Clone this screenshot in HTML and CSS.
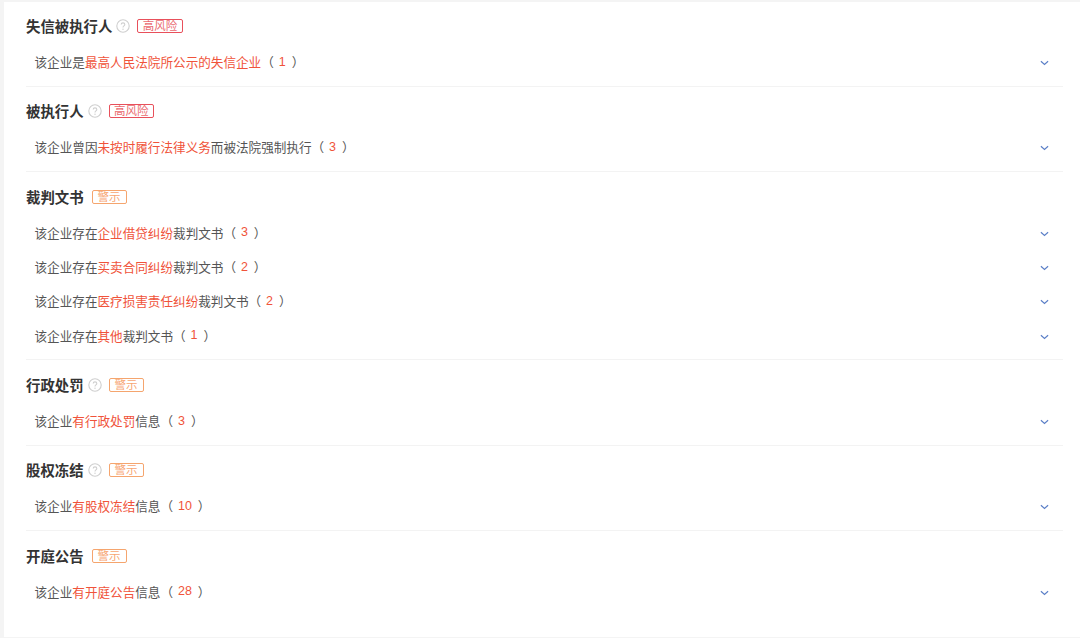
FILE: index.html
```html
<!DOCTYPE html>
<html lang="zh-CN">
<head>
<meta charset="utf-8">
<title>风险信息</title>
<link rel="stylesheet" href="styles.css">
</head>
<body>
<svg class="defs" width="0" height="0" aria-hidden="true">
  <symbol id="q" viewBox="0 0 14 14"><circle cx="7" cy="7" r="6.2" fill="none" stroke="#cfcfcf" stroke-width="1.100"/><path d="M5.2 5.6c0-1 .8-1.7 1.8-1.7s1.8.7 1.8 1.6c0 1.400-1.800 1.400-1.800 2.900" fill="none" stroke="#cfcfcf" stroke-width="1.100"/><circle cx="7" cy="10.200" r=".7" fill="#cfcfcf"/></symbol>
  <symbol id="c" viewBox="0 0 10 6"><path d="M1 1l4 3.600L9 1" fill="none" stroke="#5b7fc7" stroke-width="1.300"/></symbol>
</svg>
<main class="card">
  <section class="sec">
    <h3 class="head">失信被执行人<svg class="help"><use href="#q"/></svg><span class="tag high">高风险</span></h3>
    <div class="row"><p>该企业是<em>最高人民法院所公示的失信企业</em><span class="par">（</span><b>1</b><span class="par">）</span></p><svg class="chev"><use href="#c"/></svg></div>
  </section>
  <section class="sec">
    <h3 class="head">被执行人<svg class="help"><use href="#q"/></svg><span class="tag high">高风险</span></h3>
    <div class="row"><p>该企业曾因<em>未按时履行法律义务</em>而被法院强制执行<span class="par">（</span><b>3</b><span class="par">）</span></p><svg class="chev"><use href="#c"/></svg></div>
  </section>
  <section class="sec tall">
    <h3 class="head">裁判文书<span class="tag warn first">警示</span></h3>
    <div class="row"><p>该企业存在<em>企业借贷纠纷</em>裁判文书<span class="par">（</span><b>3</b><span class="par">）</span></p><svg class="chev"><use href="#c"/></svg></div>
    <div class="row"><p>该企业存在<em>买卖合同纠纷</em>裁判文书<span class="par">（</span><b>2</b><span class="par">）</span></p><svg class="chev"><use href="#c"/></svg></div>
    <div class="row"><p>该企业存在<em>医疗损害责任纠纷</em>裁判文书<span class="par">（</span><b>2</b><span class="par">）</span></p><svg class="chev"><use href="#c"/></svg></div>
    <div class="row"><p>该企业存在<em>其他</em>裁判文书<span class="par">（</span><b>1</b><span class="par">）</span></p><svg class="chev"><use href="#c"/></svg></div>
  </section>
  <section class="sec">
    <h3 class="head">行政处罚<svg class="help"><use href="#q"/></svg><span class="tag warn">警示</span></h3>
    <div class="row"><p>该企业<em>有行政处罚</em>信息<span class="par">（</span><b>3</b><span class="par">）</span></p><svg class="chev"><use href="#c"/></svg></div>
  </section>
  <section class="sec">
    <h3 class="head">股权冻结<svg class="help"><use href="#q"/></svg><span class="tag warn">警示</span></h3>
    <div class="row"><p>该企业<em>有股权冻结</em>信息<span class="par">（</span><b>10</b><span class="par">）</span></p><svg class="chev"><use href="#c"/></svg></div>
  </section>
  <section class="sec last">
    <h3 class="head">开庭公告<span class="tag warn first">警示</span></h3>
    <div class="row"><p>该企业<em>有开庭公告</em>信息<span class="par">（</span><b>28</b><span class="par">）</span></p><svg class="chev"><use href="#c"/></svg></div>
  </section>
</main>
</body>
</html>
```
FILE: styles.css
```css
* { box-sizing: border-box; }
html, body { margin: 0; height: 100%; }
body {
  background: #f4f4f4;
  padding: 1.500px 0 1px 4px;
  font-family: "Liberation Sans", "Noto Sans CJK SC", sans-serif;
  overflow: hidden;
}
.defs { position: absolute; }
.card {
  height: 100%;
  background: #fff;
  padding: 0 17px 0 22px;
}
.sec {
  border-bottom: 1px solid #f3f3f3;
  height: 85.330px;
  padding-top: 13px;
}
.sec.tall { height: 188.320px; }
.sec.last { border-bottom: 0; }
.head {
  margin: 0 0 8px;
  height: 22px;
  display: flex;
  align-items: center;
  font-size: 14.4px;
  font-weight: 700;
  color: #333;
}
.help { width: 14px; height: 14px; margin: 1px 0 0 4px; }
.tag {
  margin: 1px 0 0 7px;
  height: 14px;
  padding: 0 4.500px;
  border: 1px solid;
  border-radius: 2px;
  font-size: 11.500px;
  font-weight: 400;
  line-height: 12px;
  display: flex;
  align-items: center;
}
.tag.first { margin-left: 8px; }
.high { color: #ea6a6f; border-color: #e8505b; }
.warn { color: #f7a673; border-color: #f5a56e; padding: 0 5px; }
.row {
  height: 34.330px;
  display: flex;
  align-items: center;
  justify-content: space-between;
  padding: 0 14px 0 8.500px;
}
.row p {
  margin: 0;
  font-size: 12.600px;
  color: #555;
  display: flex;
  align-items: center;
}
.row em { font-style: normal; color: #f0533a; }
.row b { font-weight: 400; color: #f0533a; margin: 0 6px; font-size: 12.500px; }
.par { width: 11.500px; text-align: center; }
.chev { width: 9px; height: 6px; margin-top: 3px; }
```
